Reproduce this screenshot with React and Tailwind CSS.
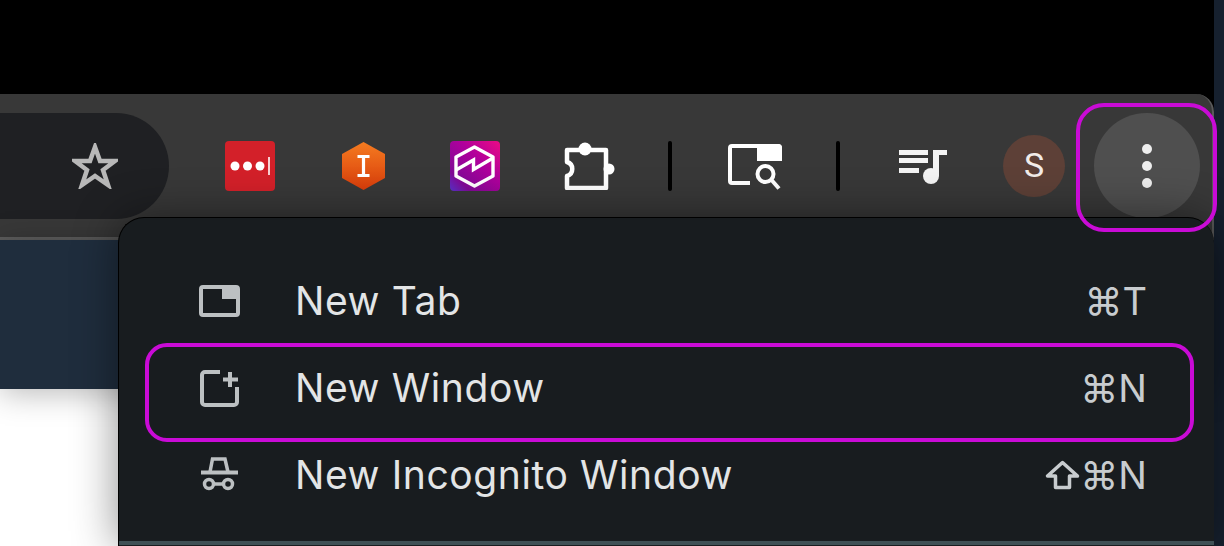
const FONT = "font-['Inter','DejaVu_Sans',sans-serif]";

function StarIcon() {
  return (
    <svg width="46" height="46" viewBox="0 0 46 46" fill="none" stroke="#b8b8b8" strokeWidth="4.5" strokeLinejoin="miter">
      <polygon points="23,4 28,18 43,18 31,27 36,42 23,33 10,42 15,27 3,18 18,18" />
    </svg>
  );
}

function LastPassIcon() {
  return (
    <svg width="50" height="50" viewBox="0 0 50 50">
      <rect width="50" height="50" rx="4" fill="#d32029" />
      <circle cx="10" cy="25" r="4.5" fill="#fff" />
      <circle cx="22.5" cy="25" r="4.5" fill="#fff" />
      <circle cx="35" cy="25" r="4.5" fill="#fff" />
      <rect x="43" y="16" width="2" height="18" fill="#f8d0d2" />
    </svg>
  );
}

function HexIcon() {
  return (
    <svg width="43" height="48" viewBox="0 0 43 48">
      <defs>
        <linearGradient id="hexFill" x1="0" y1="0" x2="0" y2="1">
          <stop offset="0" stopColor="#f47b20" />
          <stop offset="1" stopColor="#d93d0b" />
        </linearGradient>
      </defs>
      <polygon points="21.5,0 43,12 43,36 21.5,48 0,36 0,12" fill="url(#hexFill)" />
      <path d="M15.5 14.5h12M15.5 33.5h12M21.5 14.5v19" stroke="#fff" strokeWidth="3.2" fill="none" />
    </svg>
  );
}

function PulseIcon() {
  return (
    <svg width="50" height="50" viewBox="0 0 50 50">
      <defs>
        <linearGradient id="pulseFill" x1="1" y1="0" x2="0" y2="1">
          <stop offset="0" stopColor="#ec0a84" />
          <stop offset="0.4" stopColor="#b0009c" />
          <stop offset="0.8" stopColor="#800a96" />
          <stop offset="1" stopColor="#5a32cc" />
        </linearGradient>
      </defs>
      <rect width="50" height="50" rx="4" fill="url(#pulseFill)" />
      <polygon points="24.5,6 43,16 43,35 24.5,45 6,35 6,16" fill="none" stroke="#fff" strokeWidth="3.4" strokeLinejoin="round" />
      <path d="M6 29 L23.5 19 V28.5 L43 17" fill="none" stroke="#fff" strokeWidth="3.4" />
    </svg>
  );
}

function PuzzleIcon() {
  return (
    <svg width="51" height="48" viewBox="0 0 51 48">
      <path
        d="M3 8H42V46H3V34C10 32 10 22 3 20Z"
        fill="none"
        stroke="#fff"
        strokeWidth="4.5"
        strokeLinejoin="round"
      />
      <circle cx="21" cy="7" r="6.5" fill="#fff" />
      <circle cx="45" cy="27" r="5.5" fill="#fff" />
    </svg>
  );
}

function Divider() {
  return <div className="h-[50px] w-[4px] rounded-full bg-black" />;
}

function TabSearchIcon() {
  return (
    <svg width="54" height="48" viewBox="0 0 54 48" fill="none">
      <path d="M22 41H4a2 2 0 0 1-2-2V6a2 2 0 0 1 2-2h46a2 2 0 0 1 2 2v12" stroke="#fff" strokeWidth="4" />
      <path d="M29 2h21a4 4 0 0 1 4 4v13H29z" fill="#fff" />
      <circle cx="37.5" cy="32" r="8" stroke="#fff" strokeWidth="4" />
      <path d="M43.5 38l7.5 8.5" stroke="#fff" strokeWidth="4" />
    </svg>
  );
}

function MediaIcon() {
  return (
    <svg width="48" height="36" viewBox="0 0 48 36" fill="#f4f4f4">
      <rect x="0" y="2" width="29" height="5" />
      <rect x="0" y="10" width="29" height="5" />
      <rect x="0" y="20" width="20" height="5" />
      <rect x="34" y="2" width="6" height="26" />
      <rect x="34" y="2" width="14" height="5" />
      <circle cx="32" cy="28" r="8" />
    </svg>
  );
}

function NewTabIcon() {
  return (
    <svg width="41" height="32" viewBox="0 0 41 32" fill="none">
      <rect x="2" y="2" width="37" height="28" rx="2" stroke="#bcc0c2" strokeWidth="4" />
      <rect x="23" y="1" width="17" height="13" fill="#bcc0c2" />
    </svg>
  );
}

function NewWindowIcon() {
  return (
    <svg width="41" height="38" viewBox="0 0 41 38" fill="none" stroke="#bcc0c2" strokeWidth="4">
      <path d="M21 3H6a3 3 0 0 0-3 3v27a3 3 0 0 0 3 3h29a3 3 0 0 0 3-3V18" />
      <path d="M31 3v15M24 10.5h15" />
    </svg>
  );
}

function IncognitoIcon() {
  return (
    <svg width="41" height="36" viewBox="0 0 41 36" fill="none" stroke="#bcc0c2" strokeWidth="3.5">
      <path d="M11 15L13.5 2H26L29 15" />
      <path d="M2 15.5H39" strokeWidth="4" />
      <circle cx="10" cy="27" r="4.5" />
      <circle cx="29" cy="27" r="4.5" />
      <path d="M14.5 27H24.5" />
    </svg>
  );
}

function ShiftIcon() {
  return (
    <svg width="35" height="30" viewBox="0 0 35 30" fill="none" stroke="#c8cccf" strokeWidth="3.5" strokeLinejoin="round">
      <path d="M17.5 2.5L32.5 16H24.5V27.5H10.5V16H2.5Z" />
    </svg>
  );
}

const menuItems = [
  { label: "New Tab", shortcut: "⌘T", icon: <NewTabIcon /> },
  { label: "New Window", shortcut: "⌘N", icon: <NewWindowIcon /> },
  { label: "New Incognito Window", shortcut: "⌘N", shift: true, icon: <IncognitoIcon /> },
];

function BrowserMenu() {
  return (
    <div className="absolute left-[118px] top-[217px] z-10 flex h-[329px] w-[1096px] flex-col rounded-t-[26px] border-l border-t border-black bg-[#181c1f] pt-[39px] shadow-[0_0_45px_rgba(0,0,0,0.45)]">
      <div className="flex-1">
        {menuItems.map((item) => (
          <div key={item.label} className="flex h-[87px] items-center pl-[80px] pr-[67px]">
            <div className="flex w-[41px] justify-center">{item.icon}</div>
            <span className="ml-[55px] flex-1 text-[39px] leading-none tracking-[0.6px] text-[#e3e5e6]">{item.label}</span>
            {item.shift && <ShiftIcon />}
            <span className="text-[38px] leading-none text-[#c8cccf]">{item.shortcut}</span>
          </div>
        ))}
      </div>
      <div className="mb-[1px] h-[4px] bg-[#3f5055]" />
    </div>
  );
}

export default function App() {
  return (
    <div className={`relative flex h-[546px] w-[1224px] overflow-hidden bg-black ${FONT}`}>
      <div className="w-[1214px]">
        <div className="h-[94px]" />
        <div className="flex h-[143px] items-center rounded-tr-[18px] border-r-2 border-[#5a5a5a] bg-[#383838]">
          <div className="flex h-[106px] w-[169px] shrink-0 items-center rounded-r-[53px] bg-[#1f2023] pl-[72px]">
            <StarIcon />
          </div>
          <div className="ml-[56px]"><LastPassIcon /></div>
          <div className="ml-[67px]"><HexIcon /></div>
          <div className="ml-[65px]"><PulseIcon /></div>
          <div className="ml-[64px]"><PuzzleIcon /></div>
          <div className="ml-[53px]"><Divider /></div>
          <div className="ml-[56px]"><TabSearchIcon /></div>
          <div className="ml-[54px]"><Divider /></div>
          <div className="ml-[59px]"><MediaIcon /></div>
          <div className="ml-[56px] flex h-[62px] w-[62px] shrink-0 items-center justify-center rounded-full bg-[#5d4037] font-['Roboto'] text-[34px] text-[#f2ece9]">S</div>
          <div className="ml-[29px] flex h-[105px] w-[106px] shrink-0 flex-col items-center justify-center gap-[7px] rounded-full bg-[#4f4f4f]">
            <span className="h-[10px] w-[10px] rounded-full bg-[#eeeeee]" />
            <span className="h-[10px] w-[10px] rounded-full bg-[#eeeeee]" />
            <span className="h-[10px] w-[10px] rounded-full bg-[#eeeeee]" />
          </div>
        </div>
        <div className="h-[3px] bg-[#5c5c5c]" />
        <div className="relative z-[1] h-[149px] bg-[#1f2d3d] shadow-[0_4px_30px_rgba(0,0,0,0.28)]" />
        <div className="h-[157px] bg-white" />
      </div>
      <div className="flex-1 bg-[#16202e]" />

      <BrowserMenu />

      {/* highlight boxes drawn over the screenshot */}
      <div className="absolute left-[1076px] top-[103px] z-20 h-[129px] w-[141px] rounded-[28px] border-[4px] border-[#c90bd6]" />
      <div className="absolute left-[145px] top-[343px] z-20 h-[99px] w-[1049px] rounded-[22px] border-[4px] border-[#c90bd6]" />
    </div>
  );
}
